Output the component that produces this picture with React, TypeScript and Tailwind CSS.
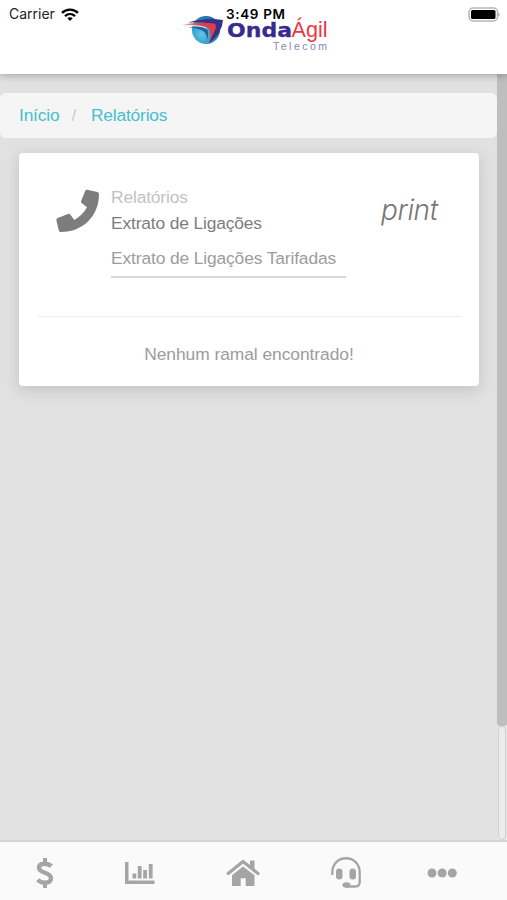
import React from "react";

function StatusBar() {
  return (
    <div className="absolute inset-x-0 top-0 flex h-7 items-center justify-between pl-[9px] pr-[6px] text-black">
      <div className="flex items-center gap-[6px]">
        <span className="font-['Inter',sans-serif] text-[14px] leading-7 text-[#222]">Carrier</span>
        <svg width="18" height="13" viewBox="0 0 18 13" fill="none" stroke="#000" strokeWidth="2.4">
          <path d="M1 4.8C5.5.5 12.5.5 17 4.8" />
          <path d="M4 8.1c3-2.7 7-2.7 10 0" />
          <path d="M6.2 10.1c1.7-1.3 3.9-1.3 5.6 0L9 12.9z" fill="#000" stroke="none" />
        </svg>
      </div>
      <span className="absolute left-[226px] font-['Inter',sans-serif] text-[13.5px] font-semibold leading-7 tracking-[0.65px]">3:49 PM</span>
      <svg width="33" height="15" viewBox="0 0 33 15">
        <rect x="1" y="1" width="28.5" height="13" rx="4" fill="#fff" stroke="#b5b5b5" strokeWidth="1.5" />
        <rect x="3" y="3" width="24.5" height="9" rx="1.5" fill="#000" />
        <path d="M30.5 5.5q2 2 0 4z" fill="#777" />
      </svg>
    </div>
  );
}

function Logo() {
  return (
    <svg className="absolute left-[180px] top-[12px]" width="152" height="42" viewBox="0 0 152 42">
      <defs>
        <radialGradient id="globe" cx="0.35" cy="0.65" r="0.75">
          <stop offset="0" stopColor="#62c6e4" />
          <stop offset="0.5" stopColor="#369dc7" />
          <stop offset="1" stopColor="#17669c" />
        </radialGradient>
        <linearGradient id="redwave" x1="0" x2="1">
          <stop offset="0" stopColor="#f3b0b2" />
          <stop offset="0.5" stopColor="#e43c49" />
        </linearGradient>
      </defs>
      <circle cx="26" cy="18" r="14" fill="url(#globe)" />
      <path d="M8 10.5Q25 5 43 8Q42.5 21 28.5 32Q36 17 33 13.5Q27 9.5 8 10.5z" fill="#363089" />
      <path d="M2 12.8Q18 9.5 34 11.5Q39.5 13.5 29 29Q32 19 28.5 16Q19 12.5 2 12.8z" fill="url(#redwave)" />
      <path d="M8 15.5Q22 13.5 27 17.5Q29.5 20 27 28Q27 21.5 23 19Q17 15.5 8 15.5z" fill="#22649e" />
      <path d="M4 14.2Q20 12.5 26.5 16.2" fill="none" stroke="#ddecf5" strokeWidth="1" />
      <text x="47" y="25" fontFamily="DejaVu Sans, sans-serif" fontSize="20" fontWeight="700" fill="#362b91" stroke="#362b91" strokeWidth="0.3" textLength="65" lengthAdjust="spacingAndGlyphs">Onda</text>
      <text x="111.5" y="25" fontFamily="Liberation Sans, sans-serif" fontSize="22" fill="#ed3843" textLength="36" lengthAdjust="spacingAndGlyphs">Ágil</text>
      <text x="93" y="38.3" fontFamily="Liberation Sans, sans-serif" fontSize="10.5" fill="#8883bf" textLength="54">Telecom</text>
    </svg>
  );
}

function Breadcrumb() {
  return (
    <nav className="mt-[19px] flex h-[45px] items-center rounded-[6px] bg-[#f5f5f5] pl-[19px] text-[17.4px] tracking-[-0.2px] text-[#45bfcf]">
      <span>Início</span>
      <span className="ml-[12px] text-[#ccc]">/</span>
      <span className="ml-[15px]">Relatórios</span>
    </nav>
  );
}

function ReportCard() {
  return (
    <section className="mx-[19px] mr-[18px] mt-[15px] h-[233px] rounded-[4px] bg-white px-[18px] shadow-[0_4px_14px_1px_rgba(0,0,0,0.12)]">
      <div className="flex h-[164px] border-b border-[#ececec]">
        <svg className="ml-[19px] mt-[36px] shrink-0" width="43" height="43" viewBox="0 0 43 43" fill="#7d7d7d">
          <path d="M31.2.7L41.4 3Q43 3.4 43 5C43 27 27 43 5 43Q3.2 43 2.8 41.4L.4 31.2Q0 29.7 1.6 29L12 24.9Q13.3 24.4 14.2 25.5L18.3 31Q27 26 31 18.3L25.6 14Q24.6 13.2 25.1 12L29.3 1.7Q29.8.4 31.2.7z" />
        </svg>
        <div className="ml-[12px] mt-[31px] h-[94px] w-[235px] whitespace-nowrap border-b-2 border-[#d7d7d7] text-[17.4px]">
          <p className="h-[26px] leading-[26px] tracking-[-0.15px] text-[#c2c2c2]">Relatórios</p>
          <p className="h-[26px] leading-[26px] tracking-[-0.15px] text-[#7d7d7d]">Extrato de Ligações</p>
          <p className="mt-[9px] h-[26px] leading-[26px] tracking-[-0.13px] text-[#9c9c9c]">Extrato de Ligações Tarifadas</p>
        </div>
        <i className="ml-[35px] mt-[37px] font-['Inter',sans-serif] text-[28px] font-light leading-[40px] tracking-[-0.4px] text-[#777]">print</i>
      </div>
      <p className="mt-[24px] text-center text-[17.4px] leading-[26px] tracking-[-0.05px] text-[#9c9c9c]">Nenhum ramal encontrado!</p>
    </section>
  );
}

function Scrollbar() {
  return (
    <div className="flex w-[10px] flex-col bg-[#e6e6e6]">
      <div className="h-[652px] rounded-b-[3px] bg-[#bebebe]" />
      <div className="mx-px flex-1 rounded-[4px] border border-[#d0d0d0] bg-[#ebebeb]" />
    </div>
  );
}

function TabBar() {
  return (
    <footer className="flex h-[60px] shrink-0 items-center border-t-2 border-[#d5d5d5] bg-[#fafafa] pt-[4px] text-[#a5a5a5]">
      <svg className="ml-[36px]" width="18" height="30" viewBox="0 0 18 30" fill="none" stroke="currentColor">
        <path d="M9 0v5M9 25v5" strokeWidth="4" />
        <path d="M15.4 8.2C12 5.2 3 4 3 9.8c0 5.7 12 4.3 12 10.3 0 6-9.5 5.6-13.3 1.6" strokeWidth="4.4" />
      </svg>
      <svg className="ml-[70px]" width="32" height="24" viewBox="0 0 32 24" fill="currentColor">
        <path d="M1 1h3.5v18.5H30.5V23H1zM8.5 12.5h3.8v5H8.5zM13.8 5h3.8v12.5h-3.8zM19.2 9H23v8.5h-3.8zM24.8 3h3.8v14.5h-3.8z" />
      </svg>
      <svg className="ml-[70px]" width="34" height="28" viewBox="0 0 34 28">
        <path d="M2.2 14.5L17 2.5l15 12" fill="none" stroke="currentColor" strokeWidth="3.2" strokeLinecap="round" strokeLinejoin="round" />
        <path d="M24 1.5h4.5v10L24 8zM6 16.2L17 7.5l11.5 8.7V27h-8.8v-7.8h-5V27H6z" fill="currentColor" />
      </svg>
      <svg className="ml-[71px]" width="30" height="32" viewBox="0 0 30 32" fill="none" stroke="currentColor">
        <path d="M1.3 18v-2.5C1.3-3.5 28.7-3.5 28.7 15.5v9.5q0 4.5-4.5 4.5H15" strokeWidth="2.3" />
        <rect x="5" y="11.5" width="6.5" height="11" rx="3.2" fill="currentColor" stroke="none" />
        <rect x="18.5" y="11.5" width="6.5" height="11" rx="3.2" fill="currentColor" stroke="none" />
        <ellipse cx="15.5" cy="28" rx="4" ry="2.7" fill="currentColor" stroke="none" />
      </svg>
      <svg className="ml-[66px]" width="30" height="10" viewBox="0 0 30 10" fill="currentColor">
        <circle cx="5" cy="5" r="4.5" />
        <circle cx="15.2" cy="5" r="4.5" />
        <circle cx="25.3" cy="5" r="4.5" />
      </svg>
    </footer>
  );
}

export default function App() {
  return (
    <div className="flex h-[900px] w-[507px] flex-col overflow-hidden bg-[#e1e1e1] font-['Liberation_Sans',Arial,sans-serif]">
      <header className="relative z-10 h-[74px] shrink-0 bg-white shadow-[0_1px_8px_rgba(0,0,0,0.3)]">
        <Logo />
        <StatusBar />
      </header>
      <div className="flex min-h-0 flex-1">
        <main className="w-[497px]">
          <Breadcrumb />
          <ReportCard />
        </main>
        <Scrollbar />
      </div>
      <TabBar />
    </div>
  );
}
